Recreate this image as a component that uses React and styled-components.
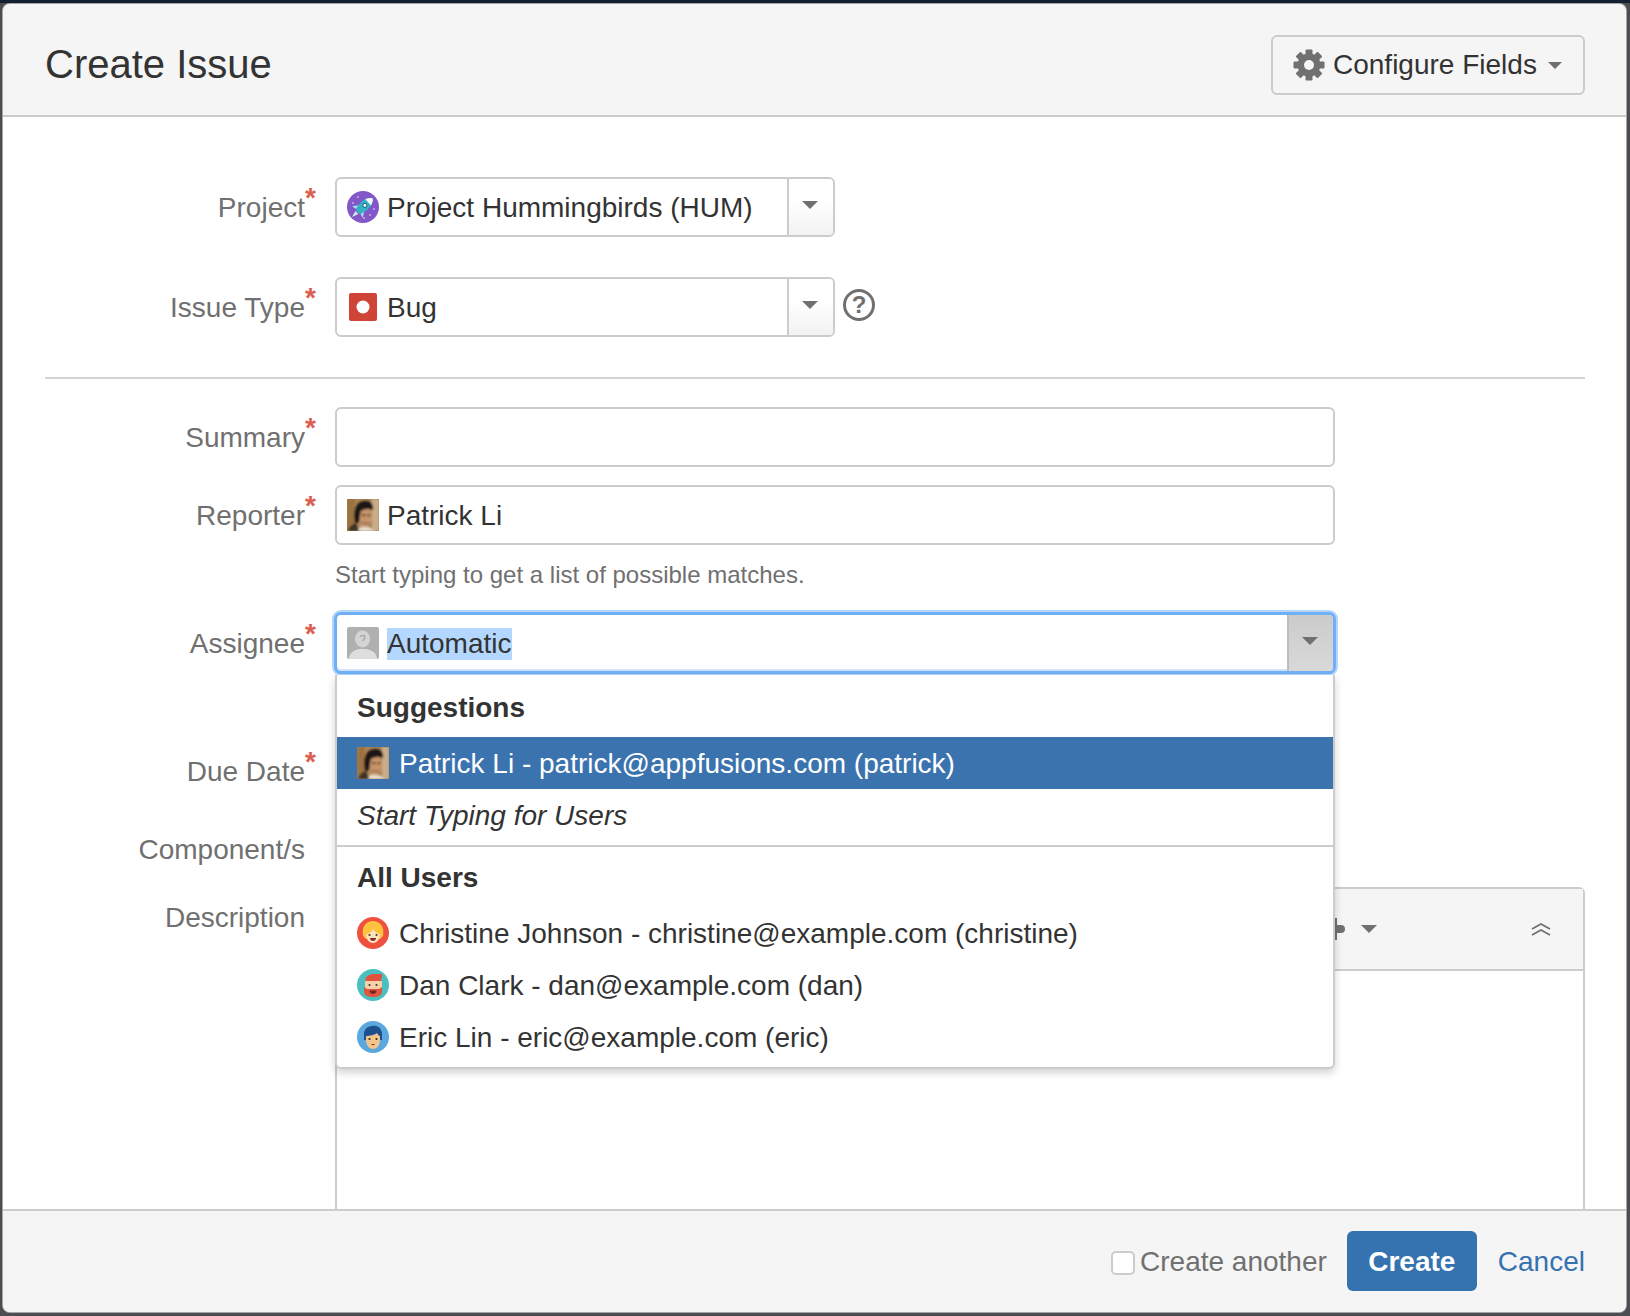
import React from "react";
import styled, { createGlobalStyle } from "styled-components";

const Global = createGlobalStyle`
  html, body { margin: 0; padding: 0; height: 1316px; overflow: hidden; }
  body { font-family: "Liberation Sans", Arial, sans-serif; font-size: 28px; color: #333; }
  * { box-sizing: border-box; }
`;

const Page = styled.div`
  height: 1316px;
  padding: 4px 4px 4px 3px;
  background: linear-gradient(#14202f 3px, #4c4d50 3px);
`;
const Modal = styled.div`
  height: 100%;
  display: flex;
  flex-direction: column;
  background: #fff;
  border-radius: 7px;
  overflow: hidden;
  box-shadow: 0 0 0 1px #a6a6a6;
`;
const Header = styled.header`
  height: 113px;
  flex: none;
  display: flex;
  align-items: center;
  justify-content: space-between;
  padding: 10px 41px 0 42px;
  background: #f5f5f5;
  border-bottom: 2px solid #ccc;
`;
const Title = styled.h1`
  margin: 0;
  font-size: 40px;
  font-weight: 400;
  color: #333;
`;
const ConfigButton = styled.button`
  width: 314px;
  height: 60px;
  margin-top: 1px;
  display: flex;
  align-items: center;
  padding: 0 21px 0 20px;
  background: #f5f5f5;
  border: 2px solid #ccc;
  border-radius: 6px;
  font: inherit;
  color: #333;
  svg { flex: none; margin-right: 8px; }
`;
const Caret = styled.span`
  display: block;
  flex: none;
  width: 0;
  height: 0;
  border-left: ${p => p.$size || 8}px solid transparent;
  border-right: ${p => p.$size || 8}px solid transparent;
  border-top: ${p => p.$size || 8}px solid #707070;
`;
const Body = styled.main`
  flex: 1;
  min-height: 0;
  overflow: hidden;
  padding: 60px 41px 0 0;
`;
const Row = styled.div`
  display: flex;
  align-items: flex-start;
  margin-top: ${p => p.$top || 0}px;
`;
const Label = styled.label`
  position: relative;
  width: 302px;
  flex: none;
  margin-right: 30px;
  height: 60px;
  line-height: 62px;
  text-align: right;
  color: #707070;
`;
const Star = styled.span`
  position: absolute;
  left: 100%;
  top: -10px;
  color: #d9604f;
  font-size: 28px;
  font-weight: 700;
`;
const Divider = styled.hr`
  margin: 40px 0 28px 42px;
  border: 0;
  height: 2px;
  background: #d4d4d4;
`;
const Field = styled.div`
  position: relative;
  width: ${p => p.$width || 1000}px;
  height: 60px;
  display: flex;
  align-items: center;
  gap: 8px;
  padding-left: 10px;
  border: 2px solid #ccc;
  border-radius: 6px;
  background: #fff;
  color: #333;
`;
const TextInput = styled.input`
  width: 1000px;
  height: 60px;
  padding: 0 10px;
  border: 2px solid #ccc;
  border-radius: 6px;
  background: #fff;
  font: inherit;
  color: #333;
  outline: none;
`;
const FocusField = styled(Field)`
  border-color: #6fb0f6;
  box-shadow: 0 0 0 1px #6fb0f6, 0 0 0 3px #b4d6fb, inset 0 -2px 0 #cfe4fc;
`;
const Selected = styled.span`
  display: inline-block;
  background: #b3d7fe;
  line-height: 32px;
  height: 32px;
`;
const ValueText = styled.span`
  flex: 1;
  padding-top: 2px;
  white-space: nowrap;
`;
const OptionText = styled.span`
  padding-top: 2px;
`;
const ButtonText = styled.span`
  flex: 1;
  text-align: left;
  white-space: nowrap;
`;
const Arrow = styled.span`
  align-self: stretch;
  flex: none;
  width: 46px;
  display: flex;
  align-items: center;
  justify-content: center;
  padding: 0 3px 4px 0;
  border-left: 2px solid ${p => (p.$active ? "#bdbdbd" : "#ccc")};
  border-radius: 0 4px 4px 0;
  background: ${p =>
    p.$active
      ? "linear-gradient(#cbcbcb, #d9d9d9)"
      : "linear-gradient(#fff 40%, #f2f2f2)"};
`;
const HelpIcon = styled.span`
  width: 32px;
  height: 32px;
  margin: 12px 0 0 8px;
  flex: none;
  display: flex;
  align-items: center;
  justify-content: center;
  border: 3px solid #707070;
  border-radius: 50%;
  color: #707070;
  font-size: 24px;
  font-weight: 700;
`;
const Hint = styled.p`
  margin: 0 0 8px 332px;
  height: 60px;
  line-height: 60px;
  font-size: 24px;
  color: #707070;
`;
const FieldWrap = styled.div`
  position: relative;
  flex: none;
`;
const Dropdown = styled.div`
  position: absolute;
  z-index: 5;
  top: calc(100% + 2px);
  left: 0;
  width: 1000px;
  height: 394px;
  background: #fff;
  border: 2px solid #ccc;
  border-top: 0;
  border-radius: 0 0 6px 6px;
  box-shadow: 0 4px 8px rgba(0, 0, 0, 0.18);
`;
const GroupTitle = styled.div`
  height: ${p => p.$height}px;
  padding: ${p => p.$pad}px 0 0 20px;
  font-weight: 700;
  line-height: 40px;
  color: #333;
`;
const Option = styled.div`
  height: 52px;
  display: flex;
  align-items: center;
  gap: 10px;
  padding-left: 20px;
  white-space: nowrap;
  background: ${p => (p.$active ? "#3b73af" : "transparent")};
  color: ${p => (p.$active ? "#fff" : "#333")};
`;
const Note = styled.div`
  height: 58px;
  padding: 1px 0 0 20px;
  line-height: 52px;
  font-style: italic;
  color: #333;
  border-bottom: 2px solid #ccc;
`;
const Editor = styled.div`
  flex: 1;
  height: 420px;
  border: 2px solid #ccc;
  border-radius: 6px 6px 0 0;
  background: #fff;
`;
const Toolbar = styled.div`
  height: 82px;
  display: flex;
  align-items: center;
  justify-content: flex-end;
  padding: 0 32px 0 0;
  background: #f5f5f5;
  border-bottom: 2px solid #ccc;
`;
const Footer = styled.footer`
  height: 103px;
  flex: none;
  display: flex;
  align-items: center;
  justify-content: flex-end;
  padding: 0 41px 1px 0;
  background: #f5f5f5;
  border-top: 2px solid #ccc;
`;
const Check = styled.input`
  appearance: none;
  width: 24px;
  height: 24px;
  margin: 4px 5px 0 0;
  background: #fff;
  border: 2px solid #ccc;
  border-radius: 5px;
`;
const CheckLabel = styled.label`
  color: #707070;
  margin-right: 20px;
  padding-top: 2px;
`;
const PrimaryButton = styled.button`
  width: 130px;
  height: 60px;
  margin-right: 21px;
  background: #3572b0;
  border: 0;
  border-radius: 6px;
  color: #fff;
  font: inherit;
  font-weight: 700;
  padding-top: 2px;
`;
const CancelLink = styled.a`
  color: #3572b0;
  padding-top: 2px;
`;

const Gear = () => (
  <svg width="32" height="32" viewBox="0 0 32 32" aria-hidden="true">
    <g fill="#707070">
      {[0, 45, 90, 135, 180, 225, 270, 315].map(a => (
        <rect key={a} x="12.5" y="0.5" width="7" height="8" rx="1" transform={`rotate(${a} 16 16)`} />
      ))}
      <circle cx="16" cy="16" r="11.5" />
    </g>
    <circle cx="16" cy="16" r="5" fill="#f5f5f5" />
  </svg>
);
const Rocket = () => (
  <svg width="32" height="32" viewBox="0 0 32 32" aria-hidden="true">
    <circle cx="16" cy="16" r="16" fill="#8457c8" />
    <g fill="#c7aeea">
      <circle cx="11" cy="6" r="1" /><circle cx="23" cy="24" r="1" /><circle cx="6" cy="12" r="1" />
      <circle cx="27" cy="18" r="1" /><circle cx="17" cy="27" r="1" />
    </g>
    <g transform="rotate(48 16 16) translate(16 16) scale(0.82) translate(-16 -14)">
      <path d="M11.500 16l-5 7 5-1zM20.500 16l5 7-5-1z" fill="#a8e6ee" />
      <path d="M16 -2c4 3 6 8 6 13 0 5-1 9-2.500 12h-7C11 20 10 16 10 11c0-5 2-10 6-13z" fill="#35b3c4" />
      <path d="M16 -2c2.500 2 4.300 4.500 5.200 7.500H10.800C11.700 2.500 13.500 0 16 -2z" fill="#eef9fb" />
      <circle cx="16" cy="11" r="2.400" fill="#fff" stroke="#1d5f85" strokeWidth="1.200" />
      <path d="M13.500 24l2.500 8 2.500-8z" fill="#cdeff3" />
    </g>
  </svg>
);
const BugIcon = () => (
  <svg width="28" height="28" viewBox="0 0 28 28" aria-hidden="true" style={{ margin: "0 2px" }}>
    <rect width="28" height="28" rx="2" fill="#d04437" />
    <circle cx="14" cy="14" r="6.500" fill="#fff" />
  </svg>
);
const Patrick = () => (
  <svg width="32" height="32" viewBox="0 0 32 32" aria-hidden="true">
    <defs>
      <filter id="soft" x="-10%" y="-10%" width="120%" height="120%"><feGaussianBlur stdDeviation="0.8" /></filter>
      <clipPath id="patrick-clip"><rect width="32" height="32" /></clipPath>
    </defs>
    <g clipPath="url(#patrick-clip)">
      <rect width="32" height="32" fill="#a88457" />
      <g filter="url(#soft)">
        <rect x="0" y="0" width="8" height="32" fill="#9c7340" />
        <rect x="25" y="0" width="7" height="32" fill="#c9ad88" />
        <ellipse cx="17.500" cy="18" rx="7.500" ry="10" fill="#c7946b" />
        <path d="M8 24C5 10 10 2 18 2c6 0 9 3 8 9-5-2-9-1-12 1-1 3-1 8-2 12z" fill="#1f1813" />
        <rect x="15" y="15.500" width="3.500" height="1.600" fill="#3b2618" />
        <rect x="20.500" y="15.500" width="3" height="1.600" fill="#3b2618" />
        <path d="M14 24h8" stroke="#8a5a3e" strokeWidth="1.200" />
        <path d="M11 32c0-3 3-5 6-4l5 0 6 4z" fill="#e8dfcf" />
        <path d="M1 32c1-4 4-7 8-8l3 8z" fill="#3c3226" />
      </g>
    </g>
  </svg>
);
const Anon = () => (
  <svg width="32" height="32" viewBox="0 0 32 32" aria-hidden="true">
    <rect width="32" height="32" rx="2" fill="#b0b0b0" />
    <ellipse cx="15.500" cy="12" rx="7.500" ry="8.500" fill="#d4d4d4" />
    <path d="M2 32c0-6 5-9 10-10h7c6 1 11 4 11 10z" fill="#dedede" />
    <path d="M13 10c1-2 5-2 5 0 0 2-2 2-2 4" fill="none" stroke="#a8a8a8" strokeWidth="1.500" />
  </svg>
);
const Christine = () => (
  <svg width="32" height="32" viewBox="0 0 32 32" aria-hidden="true">
    <circle cx="16" cy="16" r="16" fill="#f0513f" />
    <path d="M6 19C4 9 10 4 16 4s12 5 10 15l-3 3H9z" fill="#ffc23d" />
    <path d="M9 17c3 0 6-2 7-5 2 3 4 5 7 5 0 5-3 9-7 9s-7-4-7-9z" fill="#ffe3bf" />
    <circle cx="12.500" cy="18" r="1.100" fill="#4a3527" /><circle cx="19.500" cy="18" r="1.100" fill="#4a3527" />
    <path d="M13 21h6c0 2-1.500 3-3 3s-3-1-3-3z" fill="#7d3028" />
  </svg>
);
const Dan = () => (
  <svg width="32" height="32" viewBox="0 0 32 32" aria-hidden="true">
    <circle cx="16" cy="16" r="16" fill="#4bbfbf" />
    <path d="M8 15c0-6 5-10 10-10h7l-1 4 1 6z" fill="#e2533d" />
    <path d="M8 12h17v9H8z" fill="#f7cfa8" />
    <path d="M8 11c2-1 4-2 6-2h11V5h-7c-5 0-9 2-10 6z" fill="#e2533d" />
    <path d="M7 18l3 2h12l3-2v5c0 3-4 5-9 5s-9-2-9-5z" fill="#e0563f" />
    <circle cx="12.500" cy="16" r="1.100" fill="#4a3527" /><circle cx="19.500" cy="16" r="1.100" fill="#4a3527" />
    <path d="M12.500 21.500h7c0 2-1.500 3.500-3.500 3.500s-3.500-1.500-3.500-3.500z" fill="#6e2a22" />
  </svg>
);
const Eric = () => (
  <svg width="32" height="32" viewBox="0 0 32 32" aria-hidden="true">
    <circle cx="16" cy="16" r="16" fill="#5aa8dd" />
    <path d="M7 19h18v-3c0-1 .5-4-1-7-1-3-5-5-9-4-5 0-8 4-8 8z" fill="#1e4f8f" />
    <path d="M9 15c4 0 9-1 11-3 1 2 2 3 3 3v4c0 5-3 9-7 9s-7-4-7-9z" fill="#f3c58d" />
    <circle cx="12.500" cy="18" r="1.100" fill="#3d2a1c" /><circle cx="19.500" cy="18" r="1.100" fill="#3d2a1c" />
    <path d="M14 23h4c-.5 1.500-3.500 1.500-4 0z" fill="#7d3b2b" />
  </svg>
);
const ToolsPlus = () => (
  <svg width="24" height="22" viewBox="0 0 24 22" aria-hidden="true" style={{ marginRight: 16 }}>
    <path d="M11 0h5v7h4a4 4 0 0 1 0 8h-4v7h-5v-7H4a4 4 0 0 1 0-8h7z" fill="#707070" />
  </svg>
);
const Collapse = () => (
  <svg width="20" height="13" viewBox="0 0 20 13" aria-hidden="true" style={{ marginLeft: 154 }}>
    <path d="M1 6l9-5 9 5M1 12l9-5 9 5" fill="none" stroke="#707070" strokeWidth="1.800" />
  </svg>
);

const Req = () => <Star>*</Star>;

export default function App() {
  return (
    <Page>
      <Global />
      <Modal>
        <Header>
          <Title>Create Issue</Title>
          <ConfigButton type="button">
            <Gear />
            <ButtonText>Configure Fields</ButtonText>
            <Caret $size={7} />
          </ConfigButton>
        </Header>
        <Body>
          <Row>
            <Label>Project<Req /></Label>
            <Field $width={500}>
              <Rocket />
              <ValueText>Project Hummingbirds (HUM)</ValueText>
              <Arrow><Caret /></Arrow>
            </Field>
          </Row>
          <Row $top={40}>
            <Label>Issue Type<Req /></Label>
            <Field $width={500}>
              <BugIcon />
              <ValueText>Bug</ValueText>
              <Arrow><Caret /></Arrow>
            </Field>
            <HelpIcon>?</HelpIcon>
          </Row>
          <Divider />
          <Row>
            <Label>Summary<Req /></Label>
            <TextInput type="text" aria-label="Summary" />
          </Row>
          <Row $top={18}>
            <Label>Reporter<Req /></Label>
            <Field>
              <Patrick />
              <ValueText>Patrick Li</ValueText>
            </Field>
          </Row>
          <Hint>Start typing to get a list of possible matches.</Hint>
          <Row>
            <Label>Assignee<Req /></Label>
            <FieldWrap>
              <FocusField>
                <Anon />
                <ValueText><Selected>Automatic</Selected></ValueText>
                <Arrow $active><Caret /></Arrow>
              </FocusField>
              <Dropdown>
                <GroupTitle $height={62} $pad={13}>Suggestions</GroupTitle>
                <Option $active><Patrick /><OptionText>Patrick Li - patrick@appfusions.com (patrick)</OptionText></Option>
                <Note>Start Typing for Users</Note>
                <GroupTitle $height={60} $pad={11}>All Users</GroupTitle>
                <Option><Christine /><OptionText>Christine Johnson - christine@example.com (christine)</OptionText></Option>
                <Option><Dan /><OptionText>Dan Clark - dan@example.com (dan)</OptionText></Option>
                <Option><Eric /><OptionText>Eric Lin - eric@example.com (eric)</OptionText></Option>
              </Dropdown>
            </FieldWrap>
          </Row>
          <Row $top={68}>
            <Label>Due Date<Req /></Label>
            <TextInput type="text" aria-label="Due Date" />
          </Row>
          <Row $top={18}>
            <Label>Component/s</Label>
            <TextInput type="text" aria-label="Component/s" />
          </Row>
          <Row $top={8}>
            <Label>Description</Label>
            <Editor>
              <Toolbar>
                <ToolsPlus />
                <Caret />
                <Collapse />
              </Toolbar>
            </Editor>
          </Row>
        </Body>
        <Footer>
          <Check type="checkbox" id="another" />
          <CheckLabel htmlFor="another">Create another</CheckLabel>
          <PrimaryButton type="button">Create</PrimaryButton>
          <CancelLink>Cancel</CancelLink>
        </Footer>
      </Modal>
    </Page>
  );
}
